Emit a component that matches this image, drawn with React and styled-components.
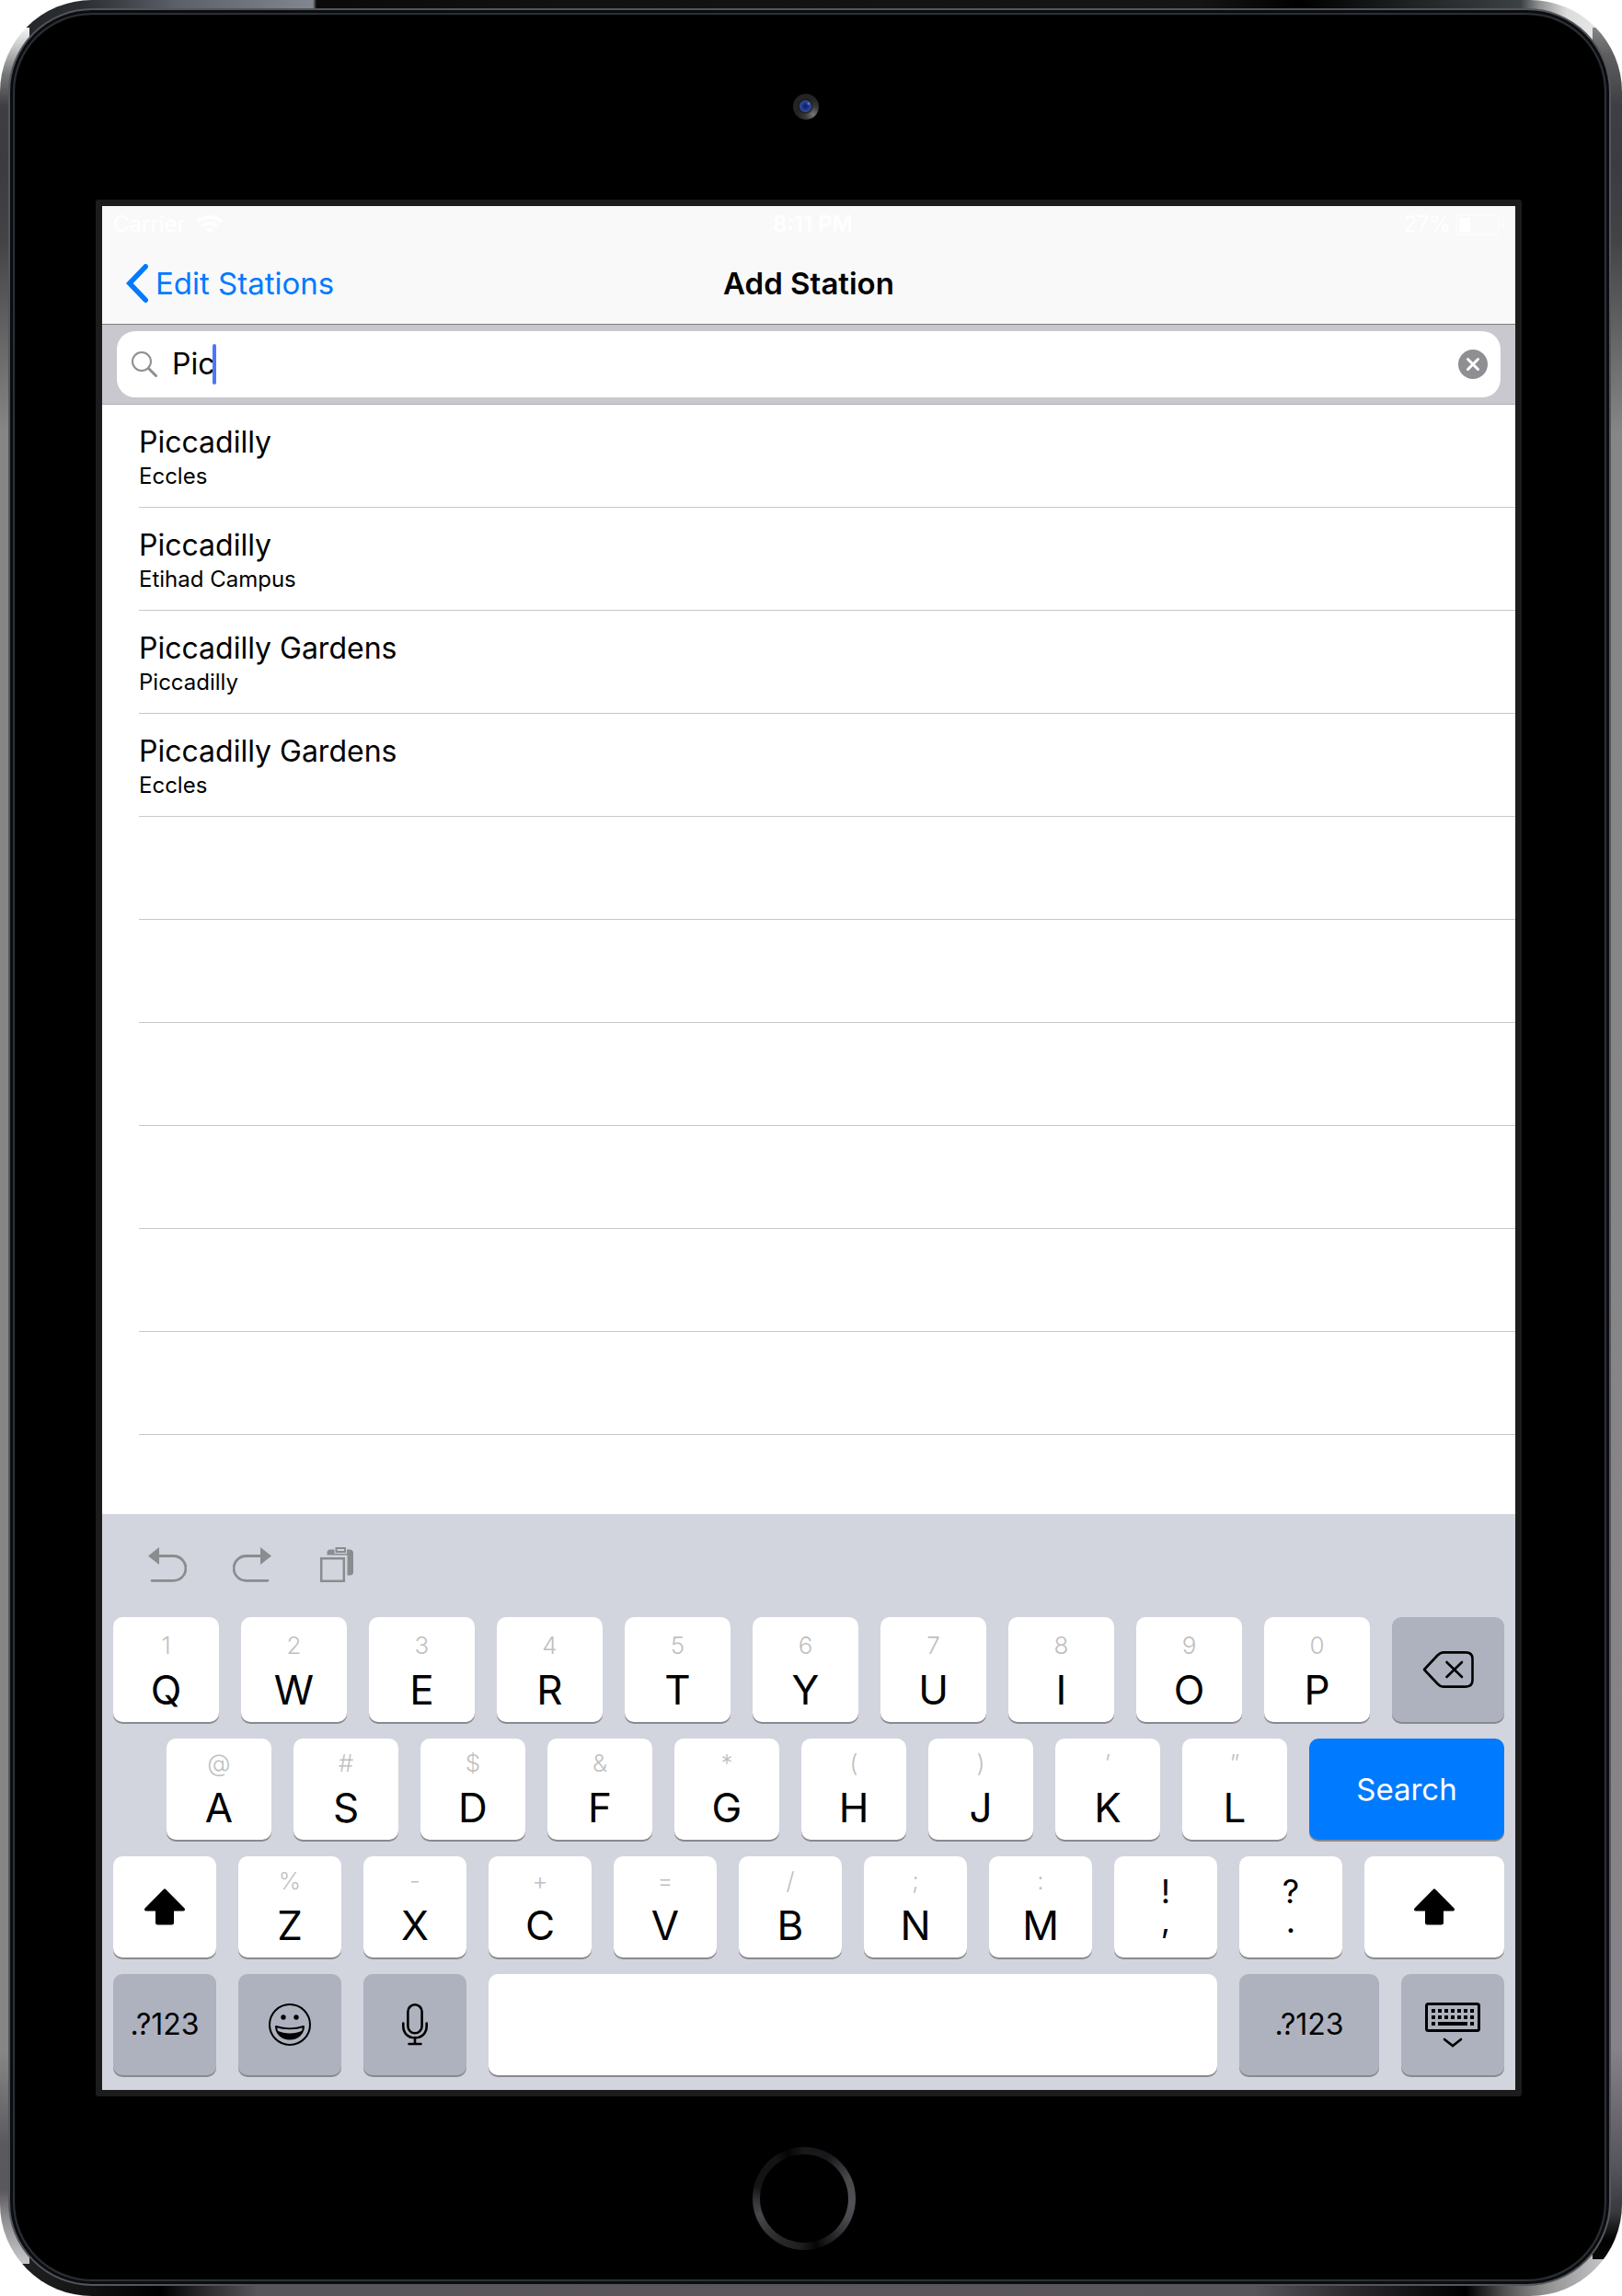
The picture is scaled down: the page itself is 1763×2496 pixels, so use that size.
import React, { useState } from "react";
import styled, { createGlobalStyle, css } from "styled-components";

const GlobalStyle = createGlobalStyle`
  *, *::before, *::after { box-sizing: border-box; }
  body {
    margin: 0;
    background: #fff;
    color: #000;
    font-family: Inter, "Liberation Sans", sans-serif;
  }
  button, input { font: inherit; color: inherit; }
  button {
    padding: 0;
    border: 0;
    background: none;
    cursor: pointer;
  }
  svg { display: block; flex: none; }
`;

/* ---------- device ---------- */

const leftRim = `linear-gradient(180deg, #f4f5f5 0, #c4c6c6 22px, #77787a 50px, #3f3e43 85px,
  #3c3b40 150px, #434245 230px, #868686 440px, #868686 calc(100% - 230px),
  #5a595e calc(100% - 130px), #59585d calc(100% - 80px), #8d8d8f calc(100% - 50px), #c6c7c9 100%)`;
const rightRim = `linear-gradient(180deg, #858585 0, #5e5e60 30px, #3f3e43 85px,
  #3c3b40 150px, #434245 230px, #868686 440px, #858387 calc(100% - 230px),
  #55545a calc(100% - 100px), #38373b calc(100% - 50px), #000 calc(100% - 20px), #0a0a0a 100%)`;
const topRim = `linear-gradient(90deg, #222428 0, #2b2e32 90px, #5b5f68 190px, #828691 340px,
  #0a0a0a 344px, #111 600px, #151515 calc(100% - 460px), #000 calc(100% - 350px),
  #1c2021 calc(100% - 240px), #3c4144 calc(100% - 110px), #8e9192 calc(100% - 90px),
  #dcdcdc calc(100% - 60px), #f0f0f0 100%)`;
const bottomRim = `linear-gradient(90deg, #232427 0, #161617 80px, #000 175px, #2a282b 220px,
  #58555a 280px, #5a565c 50%, #58555a calc(100% - 400px), #2a282b calc(100% - 290px),
  #000 calc(100% - 170px), #555 calc(100% - 125px), #8f8f90 calc(100% - 85px), #d4d4d8 100%)`;

const Device = styled.main`
  display: flex;
  min-height: 100vh;
  padding: 9px 12px 11px 9px;
  border-radius: 100px;
  background:
    ${leftRim} 0 30px / 32px calc(100% - 65px) no-repeat,
    ${rightRim} 100% 30px / 32px calc(100% - 70px) no-repeat,
    ${topRim} 0 0 / 100% 60px no-repeat,
    ${bottomRim} 0 100% / 100% 60px no-repeat;
`;

const Glass = styled.div`
  flex: 1;
  min-width: 0;
  display: flex;
  flex-direction: column;
  border: 2px solid #55565a;
  border-radius: 91px;
  background: #000;
  box-shadow: inset 0 0 0 3px #0b0c11, inset 0 0 0 5px #2b3034, inset 0 0 2px 5px #16191b;
`;

const CameraBar = styled.div`
  display: flex;
  justify-content: center;
  align-items: center;
  height: 206px;
  padding: 4px 8px 0 0;
`;

const HomeBar = styled(CameraBar)`
  height: 204px;
  padding: 18px 12px 0 0;
`;

const HomeButton = styled.button`
  width: 112px;
  height: 112px;
  padding: 8px;
  border-radius: 50%;
  background: conic-gradient(#19191b 0deg, #17181b 30deg, #48484a 65deg, #525155 95deg,
    #4a494d 115deg, #161518 155deg, #050506 165deg, #1f1f20 185deg, #2b2b2d 215deg,
    #48484c 250deg, #333337 268deg, #141415 285deg, #141415 325deg, #050405 340deg, #19191b 360deg);

  &::before {
    content: "";
    display: block;
    height: 100%;
    border-radius: 50%;
    background: #000;
  }
`;

const Screen = styled.section`
  flex: 1;
  display: flex;
  flex-direction: column;
  margin: 0 95px 0 93px;
  border: 7px solid #1c1c1c;
  border-radius: 3px;
  background: #fff;
`;

/* ---------- header ---------- */

const Header = styled.header`
  background: #f9f9f9;
  border-bottom: 1px solid #7f7f81;
`;

const StatusBar = styled.div`
  display: flex;
  justify-content: space-between;
  align-items: center;
  height: 40px;
  padding: 0 11px 0 12px;
  color: #fff;
  font-size: 24px;
  line-height: 32px;
`;

const StatusGroup = styled.div`
  display: flex;
  align-items: center;
  gap: ${(p) => p.$gap}px;
`;

const Time = styled.span`
  font-weight: 600;
`;

const NavBar = styled.nav`
  display: grid;
  grid-template-columns: 1fr auto 1fr;
  align-items: center;
  height: 88px;
  padding: 0 26px;
`;

const BackLink = styled.a`
  justify-self: start;
  display: flex;
  align-items: center;
  gap: 8px;
  color: #007aff;
  font-size: 33px;
  line-height: 40px;
  text-decoration: none;
`;

const Title = styled.h1`
  margin: 0;
  font-size: 33px;
  line-height: 40px;
  font-weight: 600;
`;

const SearchBar = styled.form`
  padding: 7px 16px;
  background: #c9c8ce;
  border-bottom: 1px solid #b2b1b6;
`;

const SearchField = styled.label`
  display: flex;
  align-items: center;
  height: 72px;
  padding: 0 14px 0 16px;
  border-radius: 20px;
  background: #fff;
`;

const SearchInput = styled.input`
  field-sizing: content;
  margin-left: 16px;
  padding: 0;
  border: 0;
  outline: 0;
  background: none;
  font-size: 32px;
  line-height: 40px;
  caret-color: transparent;
`;

const Caret = styled.span`
  width: 4px;
  height: 44px;
  margin-left: -2px;
  border-radius: 2px;
  background: #4f76f5;
`;

const ClearButton = styled.button`
  margin-left: auto;
`;

/* ---------- results ---------- */

const Results = styled.ul`
  flex: 1;
  margin: 0;
  padding: 0 0 0 40px;
  list-style: none;
`;

const ResultRow = styled.li`
  height: 112px;
  border-bottom: 1px solid #c8c7cc;
`;

const Station = styled.button`
  display: block;
  width: 100%;
  padding-top: 20px;
  text-align: left;
`;

const StationName = styled.span`
  display: block;
  font-size: 32px;
  line-height: 42px;
`;

const StationLine = styled.span`
  display: block;
  font-size: 24px;
  line-height: 32px;
`;

/* ---------- keyboard ---------- */

const Keyboard = styled.section`
  padding: 0 12px 16px;
  background: #d2d5dd;
`;

const Toolbar = styled.div`
  display: flex;
  align-items: center;
  gap: 50px;
  height: 112px;
  padding: 0 0 4px 38px;
  color: #8b8c90;
`;

const KeyRow = styled.div`
  display: flex;
  gap: 24px;
  height: ${(p) => (p.$tall ? 114 : 110)}px;
  padding-left: ${(p) => p.$indent || 0}px;

  & + & { margin-top: 18px; }
`;

const tones = {
  light: css`background: #fff; color: #000;`,
  dark: css`background: #aeb2be; color: #000;`,
  action: css`background: #007aff; color: #fff;`,
};

const Key = styled.button`
  flex: ${(p) => (p.$width ? `0 0 ${p.$width}px` : "1 1 0")};
  min-width: 0;
  display: flex;
  flex-direction: column;
  align-items: center;
  justify-content: center;
  border-radius: 10px;
  box-shadow: 0 2px 0 #898a8e;
  font-size: ${(p) => p.$size || 32}px;
  line-height: 40px;
  ${(p) => tones[p.$tone || "light"]}
`;

const LetterKey = styled(Key)`
  justify-content: flex-end;
  padding-bottom: 13px;
`;

const Hint = styled.span`
  margin-bottom: 12px;
  color: #bfbfc1;
  font-size: 26px;
  line-height: 28px;
  font-weight: 300;
`;

const Letter = styled.span`
  font-size: 44px;
  line-height: 44px;
`;

const Marks = styled.span`
  font-size: 36px;
  line-height: 32px;
  text-align: center;
  white-space: pre-line;
`;

const MarkKey = styled(Key)`
  justify-content: flex-end;
  padding-bottom: 24px;
`;

/* ---------- drawings ---------- */

const Camera = () => (
  <svg width="28" height="28" viewBox="0 0 28 28" aria-hidden="true">
    <defs>
      <radialGradient id="camBody" cx="0.78" cy="0.8" r="0.6">
        <stop offset="0" stopColor="#777" />
        <stop offset="0.5" stopColor="#3a3a3a" />
        <stop offset="1" stopColor="#242424" />
      </radialGradient>
      <radialGradient id="camLens">
        <stop offset="0" stopColor="#0c1c66" />
        <stop offset="0.5" stopColor="#1c3586" />
        <stop offset="1" stopColor="#34509c" />
      </radialGradient>
    </defs>
    <circle cx="14" cy="14" r="14" fill="url(#camBody)" />
    <circle cx="13.5" cy="13.5" r="8" fill="#17181c" opacity="0.7" />
    <circle cx="13.5" cy="13.5" r="6.5" fill="url(#camLens)" />
    <circle cx="17" cy="10.5" r="1.5" fill="#5470c0" />
  </svg>
);

const Wifi = () => (
  <svg width="28" height="20" viewBox="0 0 28 20" fill="currentColor" aria-hidden="true">
    <path d="M14 0C8.600 0 3.700 2.100 0 5.600L2.600 8.300C5.600 5.500 9.600 3.800 14 3.800s8.400 1.700 11.400 4.500L28 5.600C24.300 2.100 19.400 0 14 0z" />
    <path d="M14 6.800c-3.500 0-6.700 1.300-9.100 3.500l2.700 2.700c1.700-1.500 3.900-2.400 6.400-2.400s4.700.9 6.400 2.400l2.700-2.700C20.700 8.100 17.500 6.800 14 6.800z" />
    <path d="M14 13.400c-1.700 0-3.200.6-4.300 1.600L14 20l4.300-5c-1.100-1-2.600-1.600-4.300-1.600z" />
  </svg>
);

const Battery = () => (
  <svg width="54" height="23" viewBox="0 0 54 23" aria-hidden="true">
    <rect x="1" y="1" width="46" height="21" rx="4" fill="none" stroke="#fcfcfc" strokeWidth="2" />
    <rect x="4" y="4" width="12" height="15" rx="1" fill="#fff" />
    <path d="M50 8c2 .6 3 2 3 3.500s-1 2.900-3 3.500z" fill="#fcfcfc" />
  </svg>
);

const BackChevron = () => (
  <svg width="24" height="42" viewBox="0 0 24 42" fill="none" stroke="currentColor" strokeWidth="5.500" strokeLinecap="round" strokeLinejoin="miter" aria-hidden="true">
    <path d="M21.200 2.800L3.800 21l17.400 18.200" />
  </svg>
);

const Magnifier = () => (
  <svg width="28" height="28" viewBox="0 0 28 28" fill="none" stroke="#8e8e93" aria-hidden="true">
    <circle cx="11" cy="11" r="10" strokeWidth="2" />
    <path d="M18.500 18.500l8 8" strokeWidth="3" strokeLinecap="round" />
  </svg>
);

const Clear = () => (
  <svg width="32" height="32" viewBox="0 0 32 32" aria-hidden="true">
    <circle cx="16" cy="16" r="16" fill="#8e8e93" />
    <path d="M10.500 10.500l11 11M21.500 10.500l-11 11" stroke="#fff" strokeWidth="3" strokeLinecap="round" />
  </svg>
);

const Undo = () => (
  <svg width="42" height="42" viewBox="0 0 42 42" aria-hidden="true">
    <path d="M0 12.500L12 3v19z" fill="currentColor" />
    <path d="M11 12.500h16.500a13.300 13.300 0 0 1 0 26.800H4" fill="none" stroke="currentColor" strokeWidth="2.800" strokeLinecap="round" />
  </svg>
);

const Redo = () => (
  <svg width="42" height="42" viewBox="0 0 42 42" aria-hidden="true">
    <path d="M42 12.500L30 3v19z" fill="currentColor" />
    <path d="M31 12.500H14.500a13.300 13.300 0 0 0 0 26.800H38" fill="none" stroke="currentColor" strokeWidth="2.800" strokeLinecap="round" />
  </svg>
);

const Paste = () => (
  <svg width="42" height="42" viewBox="0 0 42 42" aria-hidden="true">
    <rect x="4.200" y="15.200" width="24.600" height="24.600" fill="none" stroke="currentColor" strokeWidth="2.500" />
    <path d="M10.500 11.500V9c0-2 1.200-3.500 3.500-3.500h21c2.500 0 4 1.500 4 4V30c0 2-1 3.500-3 3.500h-3.500v-22z" fill="currentColor" />
    <rect x="19" y="2.500" width="12.500" height="7" fill="currentColor" stroke="#d2d5dd" strokeWidth="1" />
    <path d="M21.500 6h7.500" stroke="#d2d5dd" strokeWidth="2" />
  </svg>
);

const Backspace = () => (
  <svg width="56" height="40" viewBox="0 0 56 40" fill="none" stroke="currentColor" strokeWidth="2.600" strokeLinecap="round" strokeLinejoin="round" aria-hidden="true">
    <path d="M2 20L16.500 4.500c2-2.100 3.500-3.100 6-3.100H47c5 0 7.500 2.300 7.500 7.100v23c0 4.800-2.500 7.100-7.500 7.100H22.500c-2.500 0-4-1-6-3.100z" />
    <path d="M26.500 12l16.500 16M43 12L26.500 28" />
  </svg>
);

const Shift = () => (
  <svg width="44" height="40" viewBox="0 0 44 40" fill="currentColor" aria-hidden="true">
    <path d="M21 .700q1-1 2 0l20.500 20.800c1 1.200.5 2.900-1.200 2.900H32V37q0 2.500-2.500 2.500h-15Q12 39.500 12 37V24.400H1.700C0 24.400-.5 22.700.5 21.500z" />
  </svg>
);

const Smiley = () => (
  <svg width="46" height="46" viewBox="0 0 46 46" aria-hidden="true">
    <circle cx="23" cy="23" r="22" fill="none" stroke="currentColor" strokeWidth="2" />
    <circle cx="16" cy="15" r="2.700" fill="currentColor" />
    <circle cx="30" cy="15" r="2.700" fill="currentColor" />
    <path d="M8 25c9 3 21 3 30 0-.5 8-6.500 13.500-15 13.500S8.500 33 8 25z" fill="none" stroke="currentColor" strokeWidth="2" strokeLinejoin="round" />
    <path d="M9 29.500c9 4 19 4 28 0-1.500 5.500-7 9.500-14 9.500s-12.500-4-14-9.500z" fill="currentColor" />
  </svg>
);

const Mic = () => (
  <svg width="28" height="46" viewBox="0 0 28 46" fill="none" stroke="currentColor" strokeWidth="2.600" strokeLinecap="round" aria-hidden="true">
    <rect x="6.400" y="1.300" width="15.200" height="31" rx="7.600" />
    <path d="M1.300 21.500v3c0 7.800 5.200 12.800 12.700 12.800s12.700-5 12.700-12.800v-3M14 37v6.500M7.500 44h13" />
  </svg>
);

const HideKeyboard = () => (
  <svg width="60" height="50" viewBox="0 0 60 50" aria-hidden="true">
    <rect x="1.500" y="2.500" width="57" height="29" rx="2" fill="none" stroke="currentColor" strokeWidth="3" />
    <path d="M7 10h46M7 17h46" stroke="currentColor" strokeWidth="4" strokeDasharray="4 3" />
    <path d="M7 24h4M14 24h32M49 24h4" stroke="currentColor" strokeWidth="4" />
    <path d="M21 41l9 7 9-7" fill="none" stroke="currentColor" strokeWidth="2.600" strokeLinecap="round" />
  </svg>
);

/* ---------- data ---------- */

const stations = [
  ["Piccadilly", "Eccles"],
  ["Piccadilly", "Etihad Campus"],
  ["Piccadilly Gardens", "Piccadilly"],
  ["Piccadilly Gardens", "Eccles"],
];
const blankRows = 6;

const topRow = ["1Q", "2W", "3E", "4R", "5T", "6Y", "7U", "8I", "9O", "0P"];
const middleRow = ["@A", "#S", "$D", "&F", "*G", "(H", ")J", "’K", "”L"];
const bottomRow = ["%Z", "-X", "+C", "=V", "/B", ";N", ":M"];
const marks = ["!,", "?."];

const letterKeys = (pairs, onType) =>
  pairs.map(([hint, letter]) => (
    <LetterKey key={letter} type="button" onClick={() => onType(letter.toLowerCase())}>
      <Hint>{hint}</Hint>
      <Letter>{letter}</Letter>
    </LetterKey>
  ));

export default function App() {
  const [query, setQuery] = useState("Pic");
  const type = (text) => setQuery((q) => q + text);

  return (
    <>
      <GlobalStyle />
      <Device>
        <Glass>
          <CameraBar>
            <Camera />
          </CameraBar>
          <Screen>
            <Header>
              <StatusBar>
                <StatusGroup $gap={12}>
                  <span>Carrier</span>
                  <Wifi />
                </StatusGroup>
                <Time>8:11 PM</Time>
                <StatusGroup $gap={5}>
                  <span>27%</span>
                  <Battery />
                </StatusGroup>
              </StatusBar>
              <NavBar>
                <BackLink href="#stations">
                  <BackChevron />
                  Edit Stations
                </BackLink>
                <Title>Add Station</Title>
              </NavBar>
            </Header>
            <SearchBar role="search" onSubmit={(e) => e.preventDefault()}>
              <SearchField htmlFor="station-search">
                <Magnifier />
                <SearchInput
                  id="station-search"
                  type="text"
                  aria-label="Search stations"
                  value={query}
                  onChange={(e) => setQuery(e.target.value)}
                />
                <Caret />
                <ClearButton type="button" aria-label="Clear text" onClick={() => setQuery("")}>
                  <Clear />
                </ClearButton>
              </SearchField>
            </SearchBar>
            <Results>
              {stations.map(([name, line], i) => (
                <ResultRow key={i}>
                  <Station type="button">
                    <StationName>{name}</StationName>
                    <StationLine>{line}</StationLine>
                  </Station>
                </ResultRow>
              ))}
              {Array.from({ length: blankRows }, (_, i) => (
                <ResultRow key={`blank-${i}`} aria-hidden="true" />
              ))}
            </Results>
            <Keyboard aria-label="Keyboard">
              <Toolbar>
                <button type="button" aria-label="Undo"><Undo /></button>
                <button type="button" aria-label="Redo"><Redo /></button>
                <button type="button" aria-label="Paste"><Paste /></button>
              </Toolbar>
              <KeyRow $tall>
                {letterKeys(topRow, type)}
                <Key
                  type="button"
                  $tone="dark"
                  $width={122}
                  aria-label="Delete"
                  onClick={() => setQuery((q) => q.slice(0, -1))}
                >
                  <Backspace />
                </Key>
              </KeyRow>
              <KeyRow $indent={58}>
                {letterKeys(middleRow, type)}
                <Key type="button" $tone="action" $width={212} $size={33}>Search</Key>
              </KeyRow>
              <KeyRow>
                <Key type="button" aria-label="Left shift"><Shift /></Key>
                {letterKeys(bottomRow, type)}
                {marks.map(([upper, lower]) => (
                  <MarkKey key={lower} type="button" onClick={() => type(lower)}>
                    <Marks>{`${upper}\n${lower}`}</Marks>
                  </MarkKey>
                ))}
                <Key type="button" $width={152} aria-label="Right shift"><Shift /></Key>
              </KeyRow>
              <KeyRow>
                <Key type="button" $tone="dark" $width={112}>.?123</Key>
                <Key type="button" $tone="dark" $width={112} aria-label="Emoji"><Smiley /></Key>
                <Key type="button" $tone="dark" $width={112} aria-label="Dictate"><Mic /></Key>
                <Key type="button" aria-label="Space" onClick={() => type(" ")} />
                <Key type="button" $tone="dark" $width={152}>.?123</Key>
                <Key type="button" $tone="dark" $width={112} aria-label="Hide keyboard"><HideKeyboard /></Key>
              </KeyRow>
            </Keyboard>
          </Screen>
          <HomeBar>
            <HomeButton type="button" aria-label="Home" />
          </HomeBar>
        </Glass>
      </Device>
    </>
  );
}
